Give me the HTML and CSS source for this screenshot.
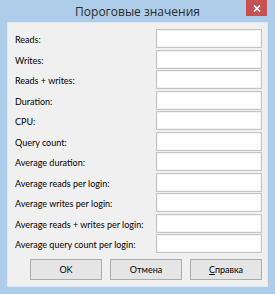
FILE: index.html
```html
<!DOCTYPE html>
<html>
<head>
<meta charset="utf-8">
<link rel="stylesheet" href="styles.css">
</head>
<body>
<div class="window">
  <div class="titlebar">
    <span></span>
    <span class="title">Пороговые значения</span>
    <span class="close-wrap"><span class="close"><svg width="8" height="7" viewBox="0 0 8 7"><path d="M1 0.5 L7 6.5 M7 0.5 L1 6.5" stroke="#fff" stroke-width="1.7"/></svg></span></span>
  </div>
  <div class="client">
    <div class="form">
      <label class="lbl">Reads:</label><div class="box"></div>
      <label class="lbl">Writes:</label><div class="box"></div>
      <label class="lbl">Reads + writes:</label><div class="box"></div>
      <label class="lbl">Duration:</label><div class="box"></div>
      <label class="lbl">CPU:</label><div class="box"></div>
      <label class="lbl">Query count:</label><div class="box"></div>
      <label class="lbl">Average duration:</label><div class="box"></div>
      <label class="lbl">Average reads per login:</label><div class="box"></div>
      <label class="lbl">Average writes per login:</label><div class="box"></div>
      <label class="lbl">Average reads + writes per login:</label><div class="box"></div>
      <label class="lbl">Average query count per login:</label><div class="box"></div>
    </div>
    <div class="buttons">
      <div class="btn">OK</div>
      <div class="btn">Отмена</div>
      <div class="btn"><u>С</u>правка</div>
    </div>
  </div>
</div>
</body>
</html>
```

FILE: styles.css
```css
html, body {
  margin: 0;
  padding: 0;
}
body {
  width: 275px;
  height: 294px;
  overflow: hidden;
  font-family: "Lato", "Open Sans", sans-serif;
}
.window {
  box-sizing: border-box;
  width: 275px;
  height: 294px;
  background: #adcdeb;
  padding: 0 7px 7px 7px;
  display: flex;
  flex-direction: column;
}
.titlebar {
  height: 22px;
  flex: none;
  display: grid;
  grid-template-columns: 1fr auto 1fr;
  align-items: start;
  margin: 0 -7px;
}
.title {
  font-family: "Open Sans", "Lato", sans-serif;
  font-size: 12px;
  color: #2b2b2b;
  line-height: 22px;
  padding-top: 1px;
}
.close-wrap {
  display: flex;
  justify-content: flex-end;
  padding-right: 8px;
}
.close {
  width: 21px;
  height: 16px;
  background: #c75050;
  display: flex;
  align-items: center;
  justify-content: center;
}
.close svg {
  display: block;
}
.client {
  flex: 1;
  background: #f0f0f0;
  border: 1px solid #dfe7ef;
  box-sizing: border-box;
  padding: 6px 5px 0 7px;
  display: flex;
  flex-direction: column;
}
.form {
  display: grid;
  grid-template-columns: 1fr 106px;
  grid-auto-rows: 19px;
  row-gap: 1.5px;
}
.lbl {
  font-size: 9px;
  color: #000;
  line-height: 19px;
  padding-top: 1px;
  white-space: nowrap;
  min-width: 0;
}
.box {
  background: #fff;
  border: 1px solid #c4c4c4;
  box-shadow: inset 0 0 0 1px #f4f4f4;
  box-sizing: border-box;
}
.buttons {
  display: flex;
  gap: 8px;
  margin-top: 6px;
  padding-left: 15px;
}
.btn {
  width: 73px;
  height: 21px;
  box-sizing: border-box;
  border: 1px solid #acacac;
  background: #e5e5e5;
  font-size: 9px;
  line-height: 19px;
  text-align: center;
  color: #000;
}
.btn u {
  text-decoration: underline;
  text-underline-offset: 1px;
}
```
